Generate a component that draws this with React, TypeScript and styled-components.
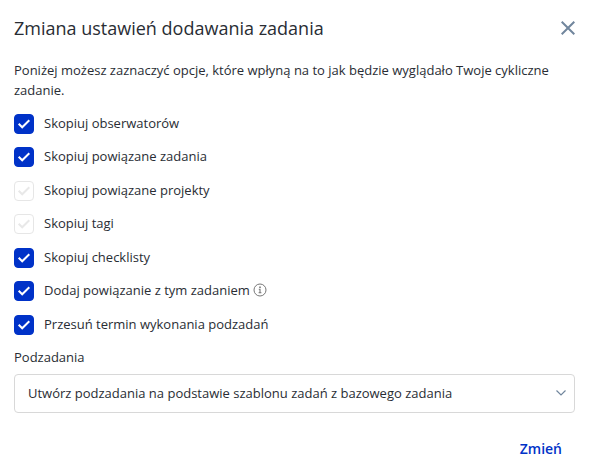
import React, { useState } from "react";
import styled, { createGlobalStyle } from "styled-components";

const GlobalStyle = createGlobalStyle`
  *, *::before, *::after { box-sizing: border-box; }
  body {
    margin: 0;
    background: #fff;
    color: #292d34;
    font: 13px/20px "Open Sans", sans-serif;
  }
  button, select, input { font: inherit; color: inherit; }
`;

const Dialog = styled.form`
  padding: 14px 17px 14px 14px;
`;

const Header = styled.header`
  display: flex;
  align-items: center;
  justify-content: space-between;
`;

const Title = styled.h1`
  margin: 0;
  font-size: 18px;
  line-height: 28px;
  font-weight: 400;
`;

const CloseButton = styled.button`
  display: flex;
  padding: 0;
  border: 0;
  background: none;
  color: #71869d;
  cursor: pointer;
`;

const Intro = styled.p`
  margin: 18px 0 14px;
`;

const OptionList = styled.ul`
  display: grid;
  grid-auto-rows: 33px 34px;
  margin: 0;
  padding: 0;
  list-style: none;
`;

const Option = styled.li`
  display: flex;
  align-items: flex-start;
`;

const OptionLabel = styled.label`
  display: flex;
  align-items: flex-start;
  gap: 10px;
  line-height: 18px;
`;

const CheckFrame = styled.span`
  display: grid;
  > * { grid-area: 1 / 1; }
`;

const CheckInput = styled.input`
  appearance: none;
  width: 20px;
  height: 20px;
  margin: 0;
  border: 1px solid #e6e6e6;
  border-radius: 4px;
  background: #fff;
  &:checked { border-color: #0032c8; background: #0032c8; }
`;

const CheckMark = styled.svg<{ $on: boolean }>`
  place-self: center;
  color: ${(p) => (p.$on ? "#fff" : "#e8e8e8")};
  pointer-events: none;
`;

const InfoIcon = styled.svg`
  margin: 2px 0 0 3px;
  color: #777;
`;

const FieldLabel = styled.label`
  display: block;
  margin-bottom: 8px;
  line-height: 18px;
`;

const SelectFrame = styled.div`
  display: grid;
  align-items: center;
  > * { grid-area: 1 / 1; }
`;

const Select = styled.select`
  appearance: none;
  width: 100%;
  height: 39px;
  padding: 0 32px 2px 13px;
  border: 1px solid #d8d8d8;
  border-radius: 4px;
  background: #fff;
`;

const Chevron = styled.svg`
  justify-self: end;
  margin: 0 8px 2px 0;
  color: #71869d;
  pointer-events: none;
`;

const Footer = styled.footer`
  display: flex;
  justify-content: flex-end;
  margin-top: 26px;
  padding-right: 13px;
`;

const SubmitButton = styled.button`
  padding: 0;
  border: 0;
  background: none;
  color: #0032c8;
  font-size: 14px;
  font-weight: 600;
  line-height: 20px;
  cursor: pointer;
`;

const options = [
  { label: "Skopiuj obserwatorów", on: true },
  { label: "Skopiuj powiązane zadania", on: true },
  { label: "Skopiuj powiązane projekty", on: false },
  { label: "Skopiuj tagi", on: false },
  { label: "Skopiuj checklisty", on: true },
  { label: "Dodaj powiązanie z tym zadaniem", on: true, info: true },
  { label: "Przesuń termin wykonania podzadań", on: true },
];

function CheckOption({ label, on, info }: { label: string; on: boolean; info?: boolean }) {
  const [checked, setChecked] = useState(on);
  return (
    <Option>
      <OptionLabel>
        <CheckFrame>
          <CheckInput type="checkbox" checked={checked} onChange={(e) => setChecked(e.target.checked)} />
          <CheckMark $on={checked} width="20" height="20" viewBox="0 0 20 20" fill="none" stroke="currentColor" strokeWidth="2" aria-hidden>
            <path d="M4.700 9.800 8.200 13.300 15.300 6.200" />
          </CheckMark>
        </CheckFrame>
        {label}
      </OptionLabel>
      {info && (
        <InfoIcon width="14" height="14" viewBox="0 0 14 14" fill="none" stroke="currentColor" aria-hidden>
          <circle cx="7" cy="7" r="6" />
          <path d="M6.200 4.300h1.600" strokeWidth="1.400" />
          <path d="M5.800 6.300H7v3.400M5.600 9.700h2.800" strokeWidth="1.100" />
        </InfoIcon>
      )}
    </Option>
  );
}

export default function App() {
  return (
    <>
      <GlobalStyle />
      <Dialog onSubmit={(e) => e.preventDefault()}>
        <Header>
          <Title>Zmiana ustawień dodawania zadania</Title>
          <CloseButton type="button" aria-label="Zamknij">
            <svg width="14" height="14" viewBox="0 0 14 14" fill="none" stroke="currentColor" strokeWidth="2">
              <path d="M.7.7l12.600 12.600M13.300.7.7 13.300" />
            </svg>
          </CloseButton>
        </Header>
        <Intro>
          Poniżej możesz zaznaczyć opcje, które wpłyną na to jak będzie wyglądało Twoje cykliczne zadanie.
        </Intro>
        <OptionList>
          {options.map((o) => <CheckOption key={o.label} {...o} />)}
        </OptionList>
        <FieldLabel htmlFor="subtasks">Podzadania</FieldLabel>
        <SelectFrame>
          <Select id="subtasks">
            <option>Utwórz podzadania na podstawie szablonu zadań z bazowego zadania</option>
          </Select>
          <Chevron width="12" height="12" viewBox="0 0 12 12" fill="none" stroke="currentColor" strokeWidth="1.200" aria-hidden>
            <path d="M1.500 3.500 6 8l4.500-4.500" />
          </Chevron>
        </SelectFrame>
        <Footer>
          <SubmitButton type="submit">Zmień</SubmitButton>
        </Footer>
      </Dialog>
    </>
  );
}
